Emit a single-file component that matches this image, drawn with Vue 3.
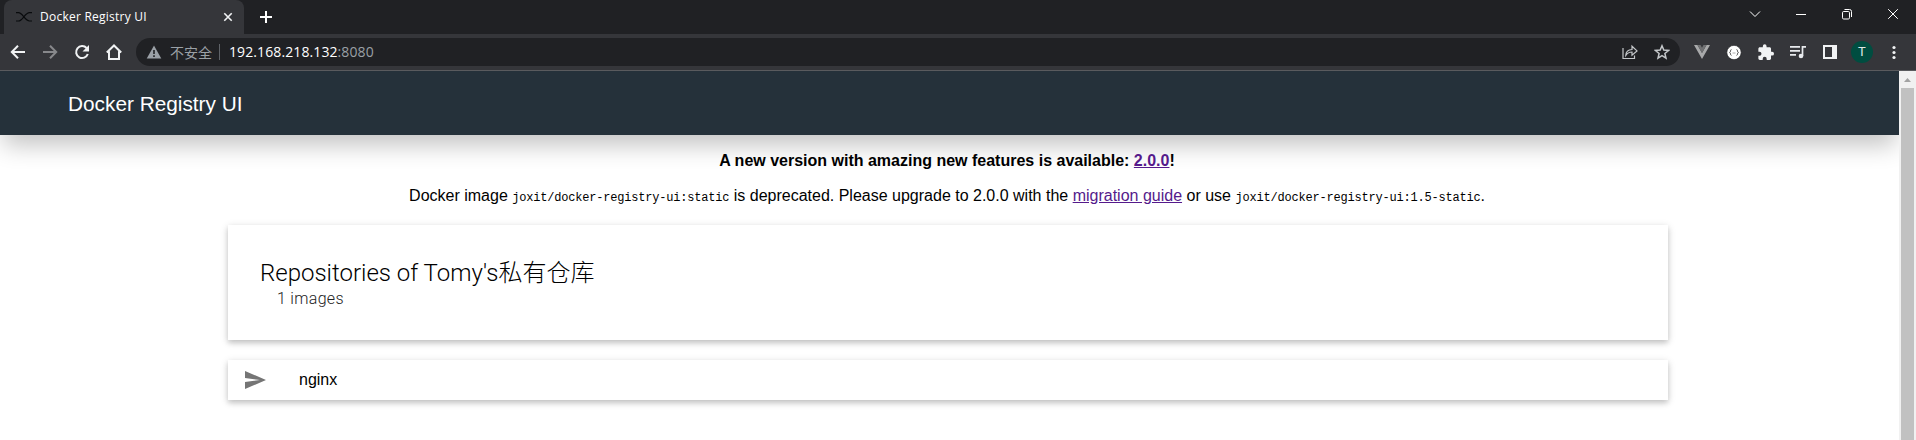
<script setup>
const version = '2.0.0'
const repositories = ['nginx']
</script>

<template>
  <div class="window">
    <div class="tabstrip">
      <div class="tab">
        <svg class="favicon" width="16" height="16" viewBox="0 0 16 16"><path d="M0 3.700h2.500c4 0 6.500 8.300 11 8.300H16M0 12h2.500c4 0 6.500-8.300 11-8.300H16" /></svg>
        <span class="tab-title">Docker Registry UI</span>
        <svg class="tab-close" width="10" height="10" viewBox="0 0 10 10"><path d="M1.300 1.300l7.400 7.400M8.700 1.300L1.300 8.700" /></svg>
      </div>
      <svg class="new-tab" width="14" height="14" viewBox="0 0 14 14"><path d="M7 1v12M1 7h12" /></svg>
      <div class="controls">
        <svg width="12" height="12" viewBox="0 0 12 12"><path d="M1 3.500l5 5 5-5" /></svg>
        <svg width="12" height="12" viewBox="0 0 12 12"><path d="M1 6.500h10" /></svg>
        <svg width="12" height="12" viewBox="0 0 12 12"><rect x="1.500" y="3.500" width="7" height="7.500" rx="1.200" /><path d="M3.500 1.500H8.500Q10.500 1.500 10.500 3.500V9" /></svg>
        <svg width="12" height="12" viewBox="0 0 12 12"><path d="M1.200 1.200l9.600 9.600M10.800 1.200L1.200 10.800" /></svg>
      </div>
    </div>

    <div class="toolbar">
      <svg class="nav" width="16" height="16" viewBox="0 0 16 16"><path d="M15 8H2.500M8 1.800L1.800 8 8 14.200" /></svg>
      <svg class="nav dim" width="16" height="16" viewBox="0 0 16 16"><path d="M1 8h12.500M8 1.800L14.200 8 8 14.200" /></svg>
      <svg class="nav" width="16" height="16" viewBox="0 0 16 16"><path d="M13.800 10A6 6 0 1 1 12.600 4" /><path class="solid" d="M15 1v6.500H8.500z" /></svg>
      <svg class="nav" width="16" height="16" viewBox="0 0 16 16"><path d="M.8 8.500L8 1.500l7.200 7M3 7.200V15h10V7.200" /></svg>
      <div class="omnibox">
        <svg class="warning" width="16" height="14" viewBox="0 0 16 14"><path d="M8 .5L15.300 13.500H.7z" /><path class="mark" d="M8 5v4M8 10.200v1.800" /></svg>
        <span class="insecure">不安全</span>
        <span class="divider"></span>
        <span class="host">192.168.218.132</span><span class="port">:8080</span>
        <svg class="share" width="16" height="16" viewBox="0 0 16 16"><path d="M1 4v10.500h11.500V11.500M3.800 11.300Q4 6 10 5.500V2.200l5 4.700-5 4.200V8Q6 8 3.800 11.300z" /></svg>
        <svg class="star" width="16" height="16" viewBox="0 0 16 16"><path d="M8 1.800l1.800 4.300 4.700.4-3.600 3 1.100 4.600-4-2.400-4 2.400 1.100-4.600-3.600-3 4.700-.4z" /></svg>
      </div>
      <div class="extensions">
        <svg width="16" height="16" viewBox="0 0 16 16"><path fill="#a8a9aa" d="M0 1h3.500L8 9l4.500-8H16L8 15z" /><path fill="#707173" d="M3.500 1h3L8 3.800 9.500 1h3L8 9z" /></svg>
        <svg width="16" height="16" viewBox="0 0 16 16"><circle cx="8" cy="8.500" r="7.200" fill="#fff" stroke="#202124" stroke-width=".7" /><path d="M5.500 5.500Q4.500 5.500 4.500 7T3.500 8.500Q4.500 8.800 4.500 10T5.500 11.500M10.500 5.500Q11.500 5.500 11.500 7T12.500 8.500Q11.500 8.800 11.500 10T10.500 11.500" fill="none" stroke="#555" stroke-width=".9" /><path d="M6.500 9h3" stroke="#999" stroke-width=".8" /></svg>
        <svg width="16" height="16" viewBox="1.500 .5 21.500 21.500"><path fill="#f1f3f4" d="M20.500 11H19V7c0-1.100-.9-2-2-2h-4V3.500a2.500 2.500 0 0 0-5 0V5H4c-1.100 0-2 .9-2 2v3.800h1.500a2.700 2.700 0 0 1 0 5.400H2V20c0 1.100.9 2 2 2h3.800v-1.500a2.700 2.700 0 0 1 5.400 0V22H17c1.100 0 2-.9 2-2v-4h1.500a2.500 2.500 0 0 0 0-5z" /></svg>
        <svg width="16" height="16" viewBox="0 0 16 16"><path d="M0 2.800h10M0 6.800h10M0 10.800h6M12.500 12V2.800H16" fill="none" stroke="#e8eaed" stroke-width="1.700" /><circle cx="11" cy="12" r="2.300" fill="#e8eaed" /></svg>
        <svg width="16" height="16" viewBox="0 0 16 16"><path fill="#f1f3f4" fill-rule="evenodd" d="M1 1h14v14H1zM3 3v10h7V3z" /></svg>
        <span class="avatar">T</span>
        <svg class="kebab" width="4" height="16" viewBox="0 0 4 16"><circle cx="2" cy="3.500" r="1.600" /><circle cx="2" cy="8.500" r="1.600" /><circle cx="2" cy="13.500" r="1.600" /></svg>
      </div>
    </div>

    <div class="viewport">
      <div class="page">
        <header class="header">Docker Registry UI</header>
        <main>
          <p class="notice strong">A new version with amazing new features is available: <a>{{ version }}</a>!</p>
          <p class="notice">Docker image <code>joxit/docker-registry-ui:static</code> is deprecated. Please upgrade to {{ version }} with the <a>migration guide</a> or use <code>joxit/docker-registry-ui:1.5-static</code>.</p>
          <section class="card summary">
            <h2>Repositories of Tomy's<span class="cjk">私有仓库</span></h2>
            <div class="count">{{ repositories.length }} images</div>
          </section>
          <section v-for="name in repositories" :key="name" class="card repo">
            <svg width="24" height="24" viewBox="0 0 24 24"><path d="M2 21l21-9L2 3v7l15 2-15 2z" /></svg>
            <span>{{ name }}</span>
          </section>
        </main>
      </div>
      <div class="scrollbar">
        <svg width="17" height="17" viewBox="0 0 17 17"><path d="M5 11h7L8.500 7z" /></svg>
        <div class="thumb"></div>
      </div>
    </div>
  </div>
</template>

<style>
html, body { overflow: hidden; }
</style>

<style scoped>
.window { width: 1916px; height: 440px; display: flex; flex-direction: column; overflow: hidden; background: #fff; font-family: "Liberation Sans", "Noto Sans CJK SC", sans-serif; }
svg { flex: none; display: block; }
.tabstrip { height: 34px; flex: none; display: flex; align-items: center; background: #202124; }
.tab { width: 240px; height: 34px; margin-left: 4px; padding: 0 11px 0 12px; box-sizing: border-box; display: flex; align-items: center; background: #35363a; border-radius: 8px 8px 0 0; }
.favicon path { fill: none; stroke: #090b0d; stroke-width: 1.200; }
.tab-title { margin-left: 8px; flex: 1; white-space: nowrap; color: #fff; font: 12px/16px "Open Sans", "Noto Sans", sans-serif; letter-spacing: .24px; }
.tab-close path { stroke: #f1f3f4; stroke-width: 1.600; }
.new-tab { margin-left: 15px; }
.new-tab path { stroke: #fff; stroke-width: 2; }
.controls { margin: -6px 17px 0 auto; display: flex; gap: 34px; }
.controls svg { fill: none; stroke: #fff; stroke-width: 1; }
.toolbar { height: 36px; flex: none; display: flex; align-items: center; padding-left: 10px; background: #35363a; border-bottom: 1px solid #5a5b5e; }
.nav { margin-right: 16px; fill: none; stroke: #f1f3f4; stroke-width: 2; }
.nav.dim { stroke: #87888b; }
.nav .solid { fill: #f1f3f4; stroke: none; }
.omnibox { width: 1544px; height: 28px; margin-left: -2px; box-sizing: border-box; padding: 0 10px; display: flex; align-items: center; background: #202124; border-radius: 14px; font: 14px/20px "Open Sans", "Noto Sans", sans-serif; }
.warning { fill: #9aa0a6; }
.warning .mark { stroke: #202124; stroke-width: 1.600; }
.insecure { margin-left: 8px; color: #9aa0a6; font: 14px/20px "Noto Sans CJK SC", sans-serif; }
.divider { width: 1px; height: 16px; margin: 0 9px 0 7px; background: #5f6368; }
.host { color: #fff; letter-spacing: .1px; }
.port { color: #9aa0a6; letter-spacing: .1px; }
.share { margin-left: auto; }
.share, .star { fill: none; stroke: #c4c7ca; stroke-width: 1.200; }
.star { margin: 0 0 0 16px; stroke-width: 1.500; }
.extensions { margin-left: 14px; display: flex; align-items: center; gap: 16px; }
.avatar { width: 22px; height: 22px; margin: 0 3px 0 -3px; border-radius: 50%; background: #004d40; color: #dfe9e7; font: 13px/22px Roboto, sans-serif; text-align: center; }
.kebab { fill: #f1f3f4; }
.viewport { flex: 1; display: flex; }
.page { width: 1899px; overflow: hidden; }
.header { height: 64px; padding-left: 68px; background: #25313a; color: #fff; font-size: 20.800px; line-height: 66px; box-shadow: 0 13px 24px -3px rgba(0, 0, 0, .24); }
main { width: 1440px; margin-left: 228px; }
.notice { margin: 16px -99px 0 -101px; font-size: 16px; line-height: 19px; text-align: center; white-space: nowrap; color: #000; }
.notice.strong { font-weight: 700; }
.notice a { color: #551a8b; text-decoration: underline; }
.notice code { font: 12px/16px "Liberation Mono", monospace; letter-spacing: -.2px; }
.card { box-sizing: border-box; background: #fff; box-shadow: 0 2px 8px rgba(0, 0, 0, .15), 0 3px 5px rgba(0, 0, 0, .14); }
.summary { height: 115px; margin-top: 19px; padding: 34px 32px 0; font-family: Roboto, "Noto Sans CJK SC", sans-serif; font-weight: 300; }
h2 { margin: 0; font-size: 24px; line-height: 28px; font-weight: 300; white-space: nowrap; }
.cjk { font-family: "Noto Sans CJK SC", sans-serif; line-height: 24px; }
.count { margin-left: 17px; font-size: 16px; line-height: 24px; letter-spacing: .3px; color: #222; }
.repo { height: 40px; margin-top: 20px; padding-left: 15px; display: flex; align-items: center; font-size: 16px; }
.repo svg { fill: #757575; margin-right: 32px; }
.scrollbar { width: 17px; background: #f1f1f1; }
.scrollbar svg { fill: #a3a3a3; }
.thumb { height: 400px; margin: 0 2px; background: #c1c1c1; }
</style>
